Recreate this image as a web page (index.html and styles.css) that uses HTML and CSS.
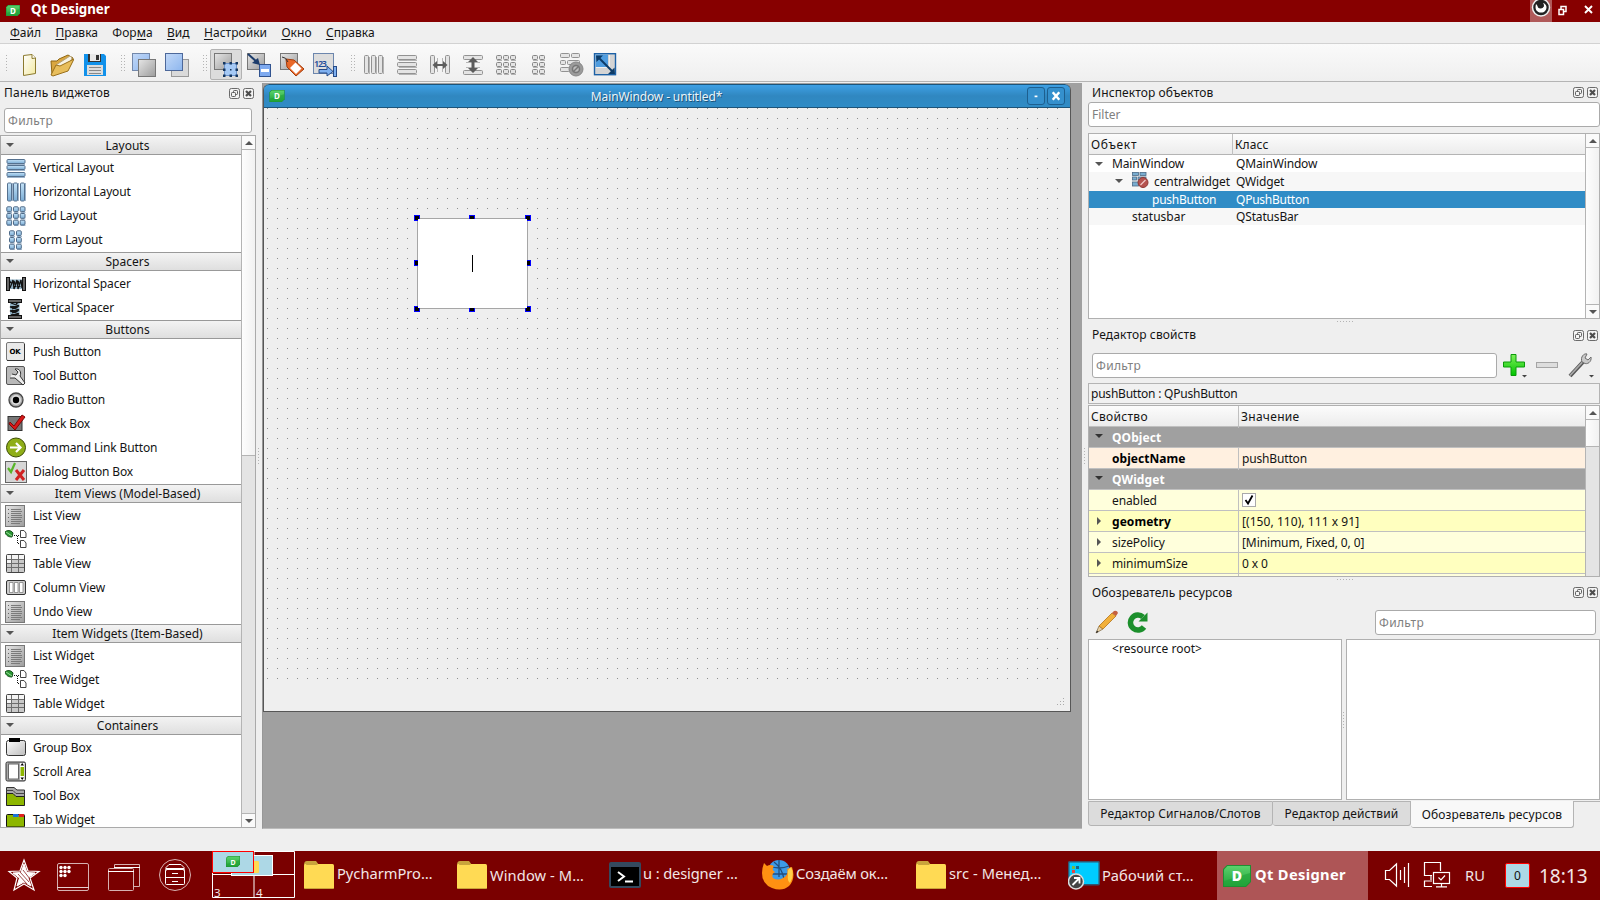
FILE: index.html
```html
<!DOCTYPE html>
<html lang="ru">
<head>
<meta charset="utf-8">
<title>Qt Designer</title>
<link rel="stylesheet" href="styles.css">
</head>
<body>
<svg class="defs" width="0" height="0" aria-hidden="true">
  <defs>
    <linearGradient id="gBlue" x1="0" y1="0" x2="0" y2="1"><stop offset="0" stop-color="#c4e2f7"/><stop offset="1" stop-color="#7badd6"/></linearGradient>
    <linearGradient id="gGray" x1="0" y1="0" x2="1" y2="1"><stop offset="0" stop-color="#e6e6e6"/><stop offset="1" stop-color="#9c9c9c"/></linearGradient>
    <linearGradient id="gLight" x1="0" y1="0" x2="1" y2="1"><stop offset="0" stop-color="#fdfdfd"/><stop offset="1" stop-color="#bdbdbd"/></linearGradient>
    <linearGradient id="gSky" x1="0" y1="0" x2="1" y2="1"><stop offset="0" stop-color="#c3d9f8"/><stop offset="1" stop-color="#8db6ee"/></linearGradient>
    <linearGradient id="gPaper" x1="0" y1="0" x2="1" y2="1"><stop offset="0" stop-color="#fff"/><stop offset="1" stop-color="#f3e9a0"/></linearGradient>
    <linearGradient id="gGreen" x1="0" y1="0" x2="0" y2="1"><stop offset="0" stop-color="#5bd16c"/><stop offset="1" stop-color="#22a63a"/></linearGradient>
    <linearGradient id="gPlus" x1="0" y1="0" x2="0" y2="1"><stop offset="0" stop-color="#7ff05a"/><stop offset="1" stop-color="#00c400"/></linearGradient>
  </defs>
  <symbol id="qt" viewBox="0 0 28 22"><path d="M4 0H28V17L23 22H0V4Z" fill="#1f8f33"/><path d="M4.500 1H27V16.500L22.500 21H1V4.500Z" fill="url(#gGreen)"/><path d="M1 16 27 8V16.500L22.500 21H1Z" fill="#1fa238" opacity=".6"/></symbol>
  <symbol id="float" viewBox="0 0 11 11"><rect x=".5" y=".5" width="10" height="10" rx="1.800" fill="#f4f4f4" stroke="#6a6a6a"/><rect x="4.500" y="2.500" width="4" height="4" rx=".8" fill="none" stroke="#5e5e5e"/><rect x="2.500" y="4.500" width="4" height="4" rx=".8" fill="#f4f4f4" stroke="#5e5e5e"/></symbol>
  <symbol id="close" viewBox="0 0 11 11"><rect x=".5" y=".5" width="10" height="10" rx="1.800" fill="#f4f4f4" stroke="#6a6a6a"/><path d="M3 3 8 8M8 3 3 8" stroke="#4e4e4e" stroke-width="2.200"/></symbol>
  <symbol id="vlay" viewBox="0 0 20 20"><g fill="url(#gBlue)" stroke="#55718f"><rect x="1" y="1.500" width="18" height="4" rx="1"/><rect x="1" y="7.500" width="18" height="4" rx="1"/><rect x="1" y="14.500" width="18" height="4" rx="1"/></g><path d="M1 6.500H19M1 12.500H19M1 19.500H19" stroke="#9db4cc"/></symbol>
  <symbol id="hlay" viewBox="0 0 20 20"><g fill="url(#gBlue)" stroke="#55718f"><rect x="1.500" y="1" width="4" height="18" rx="1"/><rect x="7.500" y="1" width="4" height="18" rx="1"/><rect x="14.500" y="1" width="4" height="18" rx="1"/></g><path d="M6.500 1V19M12.500 1V19M19.500 1V19" stroke="#9db4cc"/></symbol>
  <symbol id="grid" viewBox="0 0 20 20"><path d="M1 6.500H6M8 6.500H12.500M14.500 6.500H19.500M1 13H6M8 13H12.500M14.500 13H19.500M1 19.600H6M8 19.600H12.500M14.500 19.600H19.500" stroke="#9db4cc"/><g fill="url(#gBlue)" stroke="#4d6987"><rect x=".8" y=".8" width="4.800" height="4.800" rx="1"/><rect x="7.500" y=".8" width="4.800" height="4.800" rx="1"/><rect x="14.200" y=".8" width="4.800" height="4.800" rx="1"/><rect x=".8" y="7.500" width="4.800" height="4.800" rx="1"/><rect x="7.500" y="7.500" width="4.800" height="4.800" rx="1"/><rect x="14.200" y="7.500" width="4.800" height="4.800" rx="1"/><rect x=".8" y="14.200" width="4.800" height="4.800" rx="1"/><rect x="7.500" y="14.200" width="4.800" height="4.800" rx="1"/><rect x="14.200" y="14.200" width="4.800" height="4.800" rx="1"/></g></symbol>
  <symbol id="form" viewBox="0 0 20 20"><path d="M4 6.500H9M11 6.500H16M4 13H9M11 13H16M4 19.600H9M11 19.600H16" stroke="#9db4cc"/><g fill="url(#gBlue)" stroke="#4d6987"><rect x="3.500" y=".8" width="4.800" height="4.800" rx="1"/><rect x="10.500" y=".8" width="4.800" height="4.800" rx="1"/><rect x="3.500" y="7.500" width="4.800" height="4.800" rx="1"/><rect x="10.500" y="7.500" width="4.800" height="4.800" rx="1"/><rect x="3.500" y="14.200" width="4.800" height="4.800" rx="1"/><rect x="10.500" y="14.200" width="4.800" height="4.800" rx="1"/></g></symbol>
  <symbol id="spring" viewBox="0 0 22 22"><path d="M4 6.500H18V16H4Z" fill="#8fb0c4"/><path d="M5 15 8 7 9 16 12 7 13 16 16 7 17 15M4 7.500 6 10M9 8 11 14M13 8 15 14" fill="none" stroke="#111" stroke-width="1.300"/><rect x="1.500" y="4.500" width="3" height="13" fill="#666" stroke="#111"/><rect x="17.500" y="4.500" width="3" height="13" fill="#666" stroke="#111"/></symbol>
  <symbol id="list" viewBox="0 0 22 22"><rect x=".5" y=".5" width="19" height="21" fill="url(#gGray)" stroke="#777"/><path d="M6 4.500H16M6 6.500H17M6 8.500H16M6 10.500H17M6 12.500H17M6 14.500H16M6 16.500H17M6 18.500H15" stroke="#7b7b7b"/><path d="M3 4.500H4M3 8.500H4M3 12.500H4M3 16.500H4" stroke="#666"/></symbol>
  <symbol id="tree" viewBox="0 0 22 22"><path d="M0 3C2 1 6 1 8 4L7 8C4 8 1 7 0 3Z" fill="#2c9a35" stroke="#124d18"/><path d="M1 3 7 7" stroke="#b5e8b0" stroke-width=".8"/><path d="M9 6.500H15M12.500 7V15M13 14.500H16" stroke="#111" stroke-dasharray="1 1" fill="none"/><path d="M15.500 1.500H19L21 4V8.500H15.500ZM15.500 11.500H19L21 14V18.500H15.500Z" fill="#fff" stroke="#444"/></symbol>
  <symbol id="table" viewBox="0 0 22 22"><rect x="1.500" y="1.500" width="18" height="18" rx="1" fill="#c9c9c9" stroke="#444"/><path d="M2 2H19V6H2ZM2 7H6V10H2Z" fill="#f5f5f5"/><path d="M2 6.500H19M2 10.500H19M2 14.500H19M6.500 2V19M13.500 2V19" stroke="#6d6d6d"/></symbol>
  <symbol id="folder" viewBox="0 0 30 28"><path d="M0 4Q0 0 3 0H12L15 4V8H0Z" fill="#c9a43c"/><rect y="3" width="30" height="25" rx="1.500" fill="#ffda54"/><path d="M0 4H2L3 1H11L14 4" fill="#c9a43c"/><path d="M1 27.500H29" stroke="#caa53b"/></symbol>
  <symbol id="gv" viewBox="0 0 24 24"><g fill="#e4e4e4" stroke="#929292"><rect x="2.500" y="2.500" width="4" height="18" rx="1"/><rect x="9.500" y="2.500" width="4" height="18" rx="1"/><rect x="16.500" y="2.500" width="4" height="18" rx="1"/></g><path d="M7.500 4V21M14.500 4V21M21.500 4V21" stroke="#b4b4b4"/></symbol>
  <symbol id="gh" viewBox="0 0 24 24"><g fill="#e4e4e4" stroke="#929292"><rect x="2.500" y="2.500" width="19" height="4" rx="1"/><rect x="2.500" y="9.500" width="19" height="4" rx="1"/><rect x="2.500" y="16.500" width="19" height="4" rx="1"/></g><path d="M4 7.500H22M4 14.500H22M4 21.500H22" stroke="#b4b4b4"/></symbol>
</svg>

<header class="titlebar">
  <span class="qlogo"><svg width="14" height="11"><use href="#qt"/></svg><b>D</b></span>
  <span class="app-name">Qt Designer</span>
  <span class="win-ctl">
    <span class="eye"><svg width="22" height="22" viewBox="0 0 22 22"><circle cx="11" cy="7.500" r="8.500" fill="#222" stroke="#eee" stroke-width="1.500"/><path d="M6 4C4 11 9 14 14 12 18 9 17 4 13 3 16 8 11 10 6 4Z" fill="#fff"/><circle cx="10.500" cy="5.500" r="3" fill="#222"/></svg></span>
    <svg class="restore" width="9" height="11" viewBox="0 0 9 11"><path d="M3 4V1.500H8V6.500H6M1 4.500H5.500V9.500H1Z" fill="none" stroke="#fff" stroke-width="1.500"/></svg>
    <svg class="quit" width="9" height="9" viewBox="0 0 9 9"><path d="M1 1 8 8M8 1 1 8" stroke="#fff" stroke-width="1.900"/></svg>
  </span>
</header>

<nav class="menubar">
  <span><u>Ф</u>айл</span><span><u>П</u>равка</span><span>Фор<u>м</u>а</span><span><u>В</u>ид</span><span><u>Н</u>астройки</span><span><u>О</u>кно</span><span><u>С</u>правка</span>
</nav>

<div class="toolbar">
  <i class="grip first"></i>
  <span class="tool"><svg viewBox="0 0 24 24"><path d="M6.500 2.500 15 1.500 18.500 5V20.500L6.500 22.500Z" fill="url(#gPaper)" stroke="#8c7a2e"/><path d="M15 1.500V5.500L18.500 5" fill="#fff" stroke="#8c7a2e"/></svg></span>
  <span class="tool"><svg viewBox="0 0 24 24"><path d="M1 8H7L9 6 18 2 23 5 20 13 2 22Z" fill="#d9a640" stroke="#8f6714"/><path d="M6 12 20 3 22 5 19 12 5 20Z" fill="#f7f3e6" stroke="#b4a47c"/><path d="M1 22 6 12 10 13 24 6 18 18 3 23Z" fill="#e8be5c" stroke="#9a701b"/></svg></span>
  <span class="tool"><svg viewBox="0 0 24 24"><path d="M1 1H21L23 3V23H1Z" fill="#1191ea"/><path d="M5 1H18V9H5Z" fill="#333"/><path d="M7 1H17V8H7Z" fill="#e9e9e9"/><rect x="13" y="2" width="3" height="5" fill="#333"/><rect x="4" y="12" width="16" height="10" fill="#ddd"/><path d="M6 14.500H18M6 17.500H18M6 20.500H18" stroke="#888"/></svg></span>
  <i class="grip"></i>
  <span class="tool"><svg viewBox="0 0 24 24"><rect x=".5" y=".5" width="17" height="17" fill="url(#gSky)" stroke="#7388ab"/><rect x="6.500" y="6.500" width="17" height="17" fill="url(#gGray)" stroke="#777"/></svg></span>
  <span class="tool"><svg viewBox="0 0 24 24"><rect x="6.500" y="6.500" width="17" height="17" fill="#dadada" stroke="#999"/><rect x=".5" y=".5" width="17" height="17" fill="url(#gSky)" stroke="#4d689a"/></svg></span>
  <i class="grip"></i>
  <span class="tool on"><svg viewBox="0 0 24 24"><rect x=".5" y=".5" width="17" height="16" fill="url(#gGray)" stroke="#777"/><rect x="10.500" y="10.500" width="12" height="12" fill="#a5c9f5" stroke="#6c93cc"/><g fill="#14365f"><rect x="9" y="9" width="2.500" height="2.500"/><rect x="15.500" y="9" width="2.500" height="2.500"/><rect x="21.500" y="9" width="2.500" height="2.500"/><rect x="9" y="15.500" width="2.500" height="2.500"/><rect x="16" y="16" width="1.500" height="1.500"/><rect x="21.500" y="15.500" width="2.500" height="2.500"/><rect x="9" y="21.500" width="2.500" height="2.500"/><rect x="15.500" y="21.500" width="2.500" height="2.500"/><rect x="21.500" y="21.500" width="2.500" height="2.500"/></g></svg></span>
  <span class="tool"><svg viewBox="0 0 24 24"><rect x=".5" y=".5" width="17" height="16" fill="url(#gGray)" stroke="#777"/><rect x="12.500" y="11.500" width="11" height="12" fill="#7eaaf0" stroke="#31538f"/><path d="M14 17.500H22" stroke="#fff" stroke-width="3"/><path d="M1 1 11 10" stroke="#1d3c6b" stroke-width="2"/><path d="M13 12 5 10 11 5Z" fill="#1d3c6b"/></svg></span>
  <span class="tool"><svg viewBox="0 0 24 24"><rect x=".5" y=".5" width="17" height="16" fill="url(#gGray)" stroke="#777"/><path d="M6 6 14 7 24 16 16 23 7 14Z" fill="#e9692a" stroke="#a33c0c"/><path d="M15.500 9.500 21.500 15.500 16 21 10 15Z" fill="#fff"/><path d="M2 4Q6 4 8 9" stroke="#333" fill="none"/></svg></span>
  <span class="tool"><svg viewBox="0 0 24 24"><rect x=".5" y=".5" width="20" height="20" fill="#ddd" stroke="#6c86ad"/><text x="1" y="14" class="t123" textLength="13">123</text><path d="M6 16.500H14V13L20 18.500 14 23V20H6Z" fill="#7eb0f0" stroke="#264a86"/><rect x="20.500" y="13.500" width="3" height="10" fill="#7eb0f0" stroke="#264a86"/></svg></span>
  <i class="grip"></i>
  <span class="tool"><svg viewBox="0 0 24 24"><use href="#gv"/></svg></span>
  <span class="tool"><svg viewBox="0 0 24 24"><use href="#gh"/></svg></span>
  <span class="tool"><svg viewBox="0 0 24 24"><g fill="#e4e4e4" stroke="#929292"><rect x="2.500" y="2.500" width="4" height="18" rx="1"/><rect x="17.500" y="2.500" width="4" height="18" rx="1"/></g><path d="M9.500 5V19M14.500 5V19" stroke="#b5b5b5"/><path d="M4.500 12 9 8V11H15V8L19.500 12 15 16V13H9V16Z" fill="#5c5c5c"/></svg></span>
  <span class="tool"><svg viewBox="0 0 24 24"><g fill="#e4e4e4" stroke="#929292"><rect x="2.500" y="2.500" width="19" height="4" rx="1"/><rect x="2.500" y="17.500" width="19" height="4" rx="1"/></g><path d="M5 9.500H19M5 14.500H19" stroke="#b5b5b5"/><path d="M12 4 17 9H13.500V15H17L12 20 7 15H10.500V9H7Z" fill="#5c5c5c"/></svg></span>
  <span class="tool"><svg viewBox="0 0 24 24"><path d="M3 7.500H8M10 7.500H15M17 7.500H22M3 14.500H8M10 14.500H15M17 14.500H22M3 21.500H8M10 21.500H15M17 21.500H22" stroke="#b4b4b4"/><g fill="#e4e4e4" stroke="#868686"><rect x="2.500" y="2.500" width="5" height="4" rx="1"/><rect x="9.500" y="2.500" width="5" height="4" rx="1"/><rect x="16.500" y="2.500" width="5" height="4" rx="1"/><rect x="2.500" y="9.500" width="5" height="4" rx="1"/><rect x="9.500" y="9.500" width="5" height="4" rx="1"/><rect x="16.500" y="9.500" width="5" height="4" rx="1"/><rect x="2.500" y="16.500" width="5" height="4" rx="1"/><rect x="9.500" y="16.500" width="5" height="4" rx="1"/><rect x="16.500" y="16.500" width="5" height="4" rx="1"/></g></svg></span>
  <span class="tool"><svg viewBox="0 0 24 24"><path d="M6 7.500H11M13 7.500H18M6 14.500H11M13 14.500H18M6 21.500H11M13 21.500H18" stroke="#b4b4b4"/><g fill="#e4e4e4" stroke="#868686"><rect x="5.500" y="2.500" width="5" height="4" rx="1"/><rect x="12.500" y="2.500" width="5" height="4" rx="1"/><rect x="5.500" y="9.500" width="5" height="4" rx="1"/><rect x="12.500" y="9.500" width="5" height="4" rx="1"/><rect x="5.500" y="16.500" width="5" height="4" rx="1"/><rect x="12.500" y="16.500" width="5" height="4" rx="1"/></g></svg></span>
  <span class="tool"><svg viewBox="0 0 24 24"><g fill="#e4e4e4" stroke="#929292"><rect x=".5" y=".5" width="9" height="4" rx="1"/><rect x="11.500" y=".5" width="8" height="4" rx="1"/><rect x=".5" y="7.500" width="5" height="4" rx="1"/><rect x="7.500" y="7.500" width="12" height="4" rx="1"/><rect x=".5" y="14.500" width="9" height="4" rx="1"/></g><circle cx="16" cy="16" r="7" fill="#9b9b9b" stroke="#888"/><circle cx="16" cy="16" r="3.500" fill="#bdbdbd" stroke="#777" stroke-width="1.500"/><path d="M13 19 19 13" stroke="#777" stroke-width="1.500"/></svg></span>
  <span class="tool"><svg viewBox="0 0 24 24"><rect x="1.500" y=".7" width="21" height="21" fill="#d4d4d4" stroke="#1d61a6" stroke-width="1.400"/><path d="M2.500 1.500H15V14H2.500Z" fill="#4f9de0"/><path d="M16.500 2V14.500H3" fill="none" stroke="#eee"/><path d="M5 4 20 19" stroke="#0d3c68" stroke-width="2"/><path d="M3 2.500H10L3.500 9ZM22 21H15L21.500 14.500Z" fill="#0d3c68"/></svg></span>
</div>

<main class="work">
  <section class="left">
    <div class="dock-title"><span>Панель виджетов</span><svg width="11" height="11"><use href="#float"/></svg><svg width="11" height="11"><use href="#close"/></svg></div>
    <div class="field f-left">Фильтр</div>
    <div class="palette">
      <div class="items">
        <h4>Layouts</h4>
        <p><svg viewBox="0 0 20 20" class="s20"><use href="#vlay"/></svg>Vertical Layout</p>
        <p><svg viewBox="0 0 20 20" class="s20"><use href="#hlay"/></svg>Horizontal Layout</p>
        <p><svg viewBox="0 0 20 20" class="s20"><use href="#grid"/></svg>Grid Layout</p>
        <p><svg viewBox="0 0 20 20" class="s20"><use href="#form"/></svg>Form Layout</p>
        <h4>Spacers</h4>
        <p><svg viewBox="0 0 22 22"><use href="#spring"/></svg>Horizontal Spacer</p>
        <p><svg viewBox="0 0 22 22"><g transform="rotate(90 10 11)"><use href="#spring" width="22" height="22"/></g></svg>Vertical Spacer</p>
        <h4>Buttons</h4>
        <p><svg viewBox="0 0 22 22"><rect x="1.500" y="1.500" width="18" height="18" rx="1.500" fill="#e9e9e9" stroke="#777"/><path d="M2 19.500H19.500V3" fill="none" stroke="#333"/><text x="4.500" y="12.500" class="ok" textLength="11">OK</text></svg>Push Button</p>
        <p><svg viewBox="0 0 22 22"><rect x="1.500" y="1.500" width="18" height="18" rx="1.500" fill="#b9b9b9" stroke="#555"/><path d="M5 13H10L18 20 20 18 15 11C17 7 14 3 10 4L13 7 11 10 7 9" fill="#eee" stroke="#333"/></svg>Tool Button</p>
        <p><svg viewBox="0 0 22 22"><circle cx="11" cy="11" r="7" fill="#aaa" stroke="#444" stroke-width="1.300"/><circle cx="11" cy="11" r="5" fill="#dcdcdc"/><circle cx="11" cy="11" r="3.200" fill="#000"/></svg>Radio Button</p>
        <p><svg viewBox="0 0 22 22"><rect x="3" y="3.500" width="14" height="14" fill="#777" stroke="#333"/><path d="M5 9 9 13 17 2 20 4 10 17 4 11Z" fill="#d81818" stroke="#7d0a0a"/></svg>Check Box</p>
        <p><svg viewBox="0 0 22 22"><circle cx="11" cy="10.500" r="9.500" fill="#8fae18" stroke="#3c4c05"/><path d="M5 10.500H15M11 6 15.500 10.500 11 15" fill="none" stroke="#fff" stroke-width="2.200"/></svg>Command Link Button</p>
        <p><svg viewBox="0 0 22 22"><rect x=".5" y=".5" width="21" height="21" fill="#d6d6d6" stroke="#666"/><path d="M3 7 6 11 10 2" fill="none" stroke="#58b529" stroke-width="2.200"/><path d="M11 9 19 19M19 9 11 19" stroke="#d02222" stroke-width="3"/></svg>Dialog Button Box</p>
        <h4>Item Views (Model-Based)</h4>
        <p><svg viewBox="0 0 22 22"><use href="#list"/></svg>List View</p>
        <p><svg viewBox="0 0 22 22"><use href="#tree"/></svg>Tree View</p>
        <p><svg viewBox="0 0 22 22"><use href="#table"/></svg>Table View</p>
        <p><svg viewBox="0 0 22 22"><rect x="1.500" y="3.500" width="19" height="14" rx="1.500" fill="#ccc" stroke="#333"/><path d="M4.500 5.500H8V15.500H4.500ZM9.500 5.500H13V15.500H9.500ZM14.500 5.500H18V15.500H14.500Z" fill="#fff" stroke="#777" stroke-width=".7"/></svg>Column View</p>
        <p><svg viewBox="0 0 22 22"><use href="#list"/></svg>Undo View</p>
        <h4>Item Widgets (Item-Based)</h4>
        <p><svg viewBox="0 0 22 22"><use href="#list"/></svg>List Widget</p>
        <p><svg viewBox="0 0 22 22"><use href="#tree"/></svg>Tree Widget</p>
        <p><svg viewBox="0 0 22 22"><use href="#table"/></svg>Table Widget</p>
        <h4>Containers</h4>
        <p><svg viewBox="0 0 22 22"><rect x="1.500" y="3.500" width="19" height="15" rx="2" fill="url(#gLight)" stroke="#333"/><rect x="4" y="1" width="11" height="4" fill="#000"/></svg>Group Box</p>
        <p><svg viewBox="0 0 22 22"><rect x="1" y="1" width="19.500" height="19" rx="1.500" fill="#aaa" stroke="#333"/><rect x="3.500" y="3" width="10" height="15" fill="#fff" stroke="#666"/><rect x="15" y="2" width="4.500" height="17" fill="#fff"/><rect x="15.500" y="6" width="3.500" height="9" fill="#8db600"/><path d="M15.500 4.500H19L17.200 2ZM15.500 16.500H19L17.200 19Z"/></svg>Scroll Area</p>
        <p><svg viewBox="0 0 22 22"><path d="M1.500 2.500H9L12 5H19.500V20H1.500Z" fill="#aaa" stroke="#333"/><path d="M1.500 5.500H8L11 8.500H19.500" fill="none" stroke="#444"/><path d="M1.500 8.500H8L11 11.500H19.500V20.500H1.500Z" fill="#8db600" stroke="#222"/></svg>Tool Box</p>
        <p><svg viewBox="0 0 22 22"><rect x="1.500" y="5.500" width="18" height="12.500" rx="1" fill="#8db600" stroke="#111"/><rect x="8" y="5" width="5.500" height="3" fill="#1b72d8"/><rect x="14" y="5" width="5" height="3" fill="#e02020"/></svg>Tab Widget</p>
      </div>
      <div class="sbar s-left"><b class="up"></b><i class="thumb"></i><b class="down"></b></div>
    </div>
  </section>
  <div class="split"><i class="dots-v"></i></div>

  <section class="mdi">
    <div class="subwin">
      <div class="sub-title">
        <span class="qlogo q2"><svg width="16" height="12"><use href="#qt"/></svg><b>D</b></span>
        <span class="cap">MainWindow - untitled*</span>
        <span class="sbtn"><svg viewBox="0 0 17 17"><rect x="7" y="8" width="3" height="1.800" fill="#fff"/></svg></span>
        <span class="sbtn"><svg viewBox="0 0 17 17"><path d="M5 4.500 12 12.500M12 4.500 5 12.500" stroke="#fff" stroke-width="2.600"/></svg></span>
      </div>
      <div class="canvas">
        <svg width="808" height="603" viewBox="263 108 808 603">
          <defs><pattern id="pt" x="267" y="108" width="10" height="10" patternUnits="userSpaceOnUse"><rect width="1" height="1" fill="#8e8e8e"/></pattern></defs>
          <rect x="267" y="108" width="800" height="572" fill="url(#pt)"/>
          <rect x="417" y="218" width="111" height="91" fill="#a6a6a6"/>
          <g fill="#000" stroke="#00f">
            <rect x="414.500" y="215.500" width="5" height="5"/><rect x="469.500" y="215.500" width="5" height="5"/><rect x="525.500" y="215.500" width="5" height="5"/>
            <rect x="414.500" y="260.500" width="5" height="5"/><rect x="525.500" y="260.500" width="5" height="5"/>
            <rect x="414.500" y="306.500" width="5" height="5"/><rect x="469.500" y="306.500" width="5" height="5"/><rect x="525.500" y="306.500" width="5" height="5"/>
          </g>
          <rect x="418" y="219" width="109" height="89" fill="#fff"/>
          <rect x="472" y="255" width="1" height="17" fill="#000"/>
          <path d="M1063 698h1v1h-1zm0 3h1v1h-1zm-3 0h1v1h-1zm3 3h1v1h-1zm-3 0h1v1h-1zm-3 0h1v1h-1z" fill="#aaa"/>
        </svg>
      </div>
    </div>
  </section>
  <div class="split s2"><i class="dots-v"></i></div>

  <section class="right">
    <div class="dock-title dt1"><span>Инспектор объектов</span><svg width="11" height="11"><use href="#float"/></svg><svg width="11" height="11"><use href="#close"/></svg></div>
    <div class="field f-insp">Filter</div>
    <div class="box insp">
      <div class="cols">
        <div class="row head"><span class="wide">Объект</span><span>Класс</span></div>
        <div class="row r1"><span class="d1">MainWindow</span><span>QMainWindow</span></div>
        <div class="row r2 alt"><span class="d2"><svg width="17" height="16" viewBox="0 0 17 16"><g fill="#79add0" stroke="#4b6a86" stroke-width=".8"><rect x=".5" y=".5" width="6" height="3"/><rect x="8" y=".5" width="6" height="3"/><rect x=".5" y="5" width="4" height="3"/><rect x="6" y="5" width="8" height="3"/><rect x=".5" y="10" width="6" height="4"/></g><circle cx="11" cy="10.500" r="5" fill="#b5534f" stroke="#8f3734"/><path d="M8.500 13 13.500 8" stroke="#f0c8c8" stroke-width="1.300"/></svg>centralwidget</span><span>QWidget</span></div>
        <div class="row sel"><span class="d3">pushButton</span><span>QPushButton</span></div>
        <div class="row alt"><span class="d4">statusbar</span><span>QStatusBar</span></div>
      </div>
      <div class="sbar"><b class="up"></b><i class="thumb full"></i><b class="down"></b></div>
    </div>
    <div class="hs"><i class="dots-h"></i></div>

    <div class="dock-title dt2"><span>Редактор свойств</span><svg width="11" height="11"><use href="#float"/></svg><svg width="11" height="11"><use href="#close"/></svg></div>
    <div class="prop-tools">
      <div class="field">Фильтр</div>
      <svg width="26" height="26" viewBox="0 0 26 26"><path d="M9 1.500H14V9H22.500V14H14V22.500H9V14H1.500V9H9Z" fill="url(#gPlus)" stroke="#0a9a0a"/><path d="M20 22H25L22.500 24.500Z" fill="#444"/></svg>
      <svg width="26" height="26" viewBox="0 0 26 26"><rect x="1.500" y="9.500" width="21" height="5" fill="#ddd" stroke="#a5a5a5"/></svg>
      <svg width="27" height="26" viewBox="0 0 27 26"><path d="M2 23 15 9" stroke="#555" stroke-width="4"/><path d="M2 22.500 15 8.500" stroke="#aaa" stroke-width="1.800"/><path d="M14 9C12 4 16 0 19 1L17 5 20 7 23 4C24 9 19 12 16 10Z" fill="#c9c9c9" stroke="#6c6c6c"/><path d="M21 22H26L23.500 24.500Z" fill="#444"/></svg>
    </div>
    <div class="obj-label">pushButton : QPushButton</div>
    <div class="box props">
      <div class="cols">
        <div class="row head"><span>Свойство</span><span>Значение</span></div>
        <div class="row cat"><span class="open">QObject</span></div>
        <div class="row peach"><span><b>objectName</b></span><span>pushButton</span></div>
        <div class="row cat"><span class="open">QWidget</span></div>
        <div class="row y1"><span>enabled</span><span><i class="chk"><svg width="14" height="14" viewBox="0 0 14 14"><path d="M3.500 7 6 10.500 10.500 2.500" fill="none" stroke="#000" stroke-width="1.800"/></svg></i></span></div>
        <div class="row y2"><span class="shut"><b>geometry</b></span><span class="geo">[(150, 110), 111 x 91]</span></div>
        <div class="row y1"><span class="shut">sizePolicy</span><span>[Minimum, Fixed, 0, 0]</span></div>
        <div class="row y2"><span class="shut">minimumSize</span><span>0 x 0</span></div>
        <div class="row y1 tail"><span></span><span></span></div>
      </div>
      <div class="sbar"><b class="up"></b><i class="thumb short"></i><b class="down"></b></div>
    </div>
    <div class="hs"><i class="dots-h"></i></div>

    <div class="dock-title dt3"><span>Обозреватель ресурсов</span><svg width="11" height="11"><use href="#float"/></svg><svg width="11" height="11"><use href="#close"/></svg></div>
    <div class="res-tools">
      <svg width="24" height="24" viewBox="0 0 24 24"><path d="M1 23 4 16 8 19Z" fill="#e6cfa3" stroke="#7b6541" stroke-width=".7"/><path d="M4 16 17 3 21 6 8 19Z" fill="#f2b03a" stroke="#b3741a" stroke-width=".8"/><path d="M17 3 19 1Q22 0 23 3L21 6Z" fill="#c5603f"/><path d="M1 23 2 20.500 3.500 22Z" fill="#222"/></svg>
      <svg width="22" height="22" viewBox="0 0 22 22"><path d="M17 16A7.500 7.500 0 1 1 16 6" fill="none" stroke="#1c8f2c" stroke-width="5.500"/><path d="M20.500 1.500V10.500H11.500L14 8 16 6Z" fill="#1c8f2c"/></svg>
      <div class="field">Фильтр</div>
    </div>
    <div class="res-panes">
      <div class="pane">&lt;resource root&gt;</div>
      <div class="pane-split"><i class="dots-v"></i></div>
      <div class="pane"></div>
    </div>
    <div class="tabs"><span class="tab t1">Редактор Сигналов/Слотов</span><span class="tab t2">Редактор действий</span><span class="tab t3">Обозреватель ресурсов</span><span class="fill"></span></div>
  </section>
</main>

<footer class="taskbar">
  <svg class="launch" width="208" height="49" viewBox="0 851 208 49" fill="none" stroke="#fff">
    <path d="M24 860 28 871 39 871.500 30 878 34 890 24 884 14 890 17 878 9 871.500 20 871Z" stroke-width="1.200"/><path d="M24 864 27 872.500 35 873 28 878 31 886 24 882 17 886 19.500 878 13 873 21 872.500Z" fill="#fff"/><path d="M18 874 27 884M20 872 29 882M23 870 30 879" stroke="#7a0000" stroke-width=".7"/>
    <rect x="57.500" y="863.500" width="31" height="27" rx="1.500" stroke="#d6b1b1"/><path d="M57 887.500H89" stroke="#e8d0d0"/><g fill="#fff" stroke="none"><circle cx="61" cy="867.500" r="1.700"/><circle cx="65" cy="867.500" r="1.700"/><circle cx="69" cy="867.500" r="1.700"/><circle cx="61" cy="871.500" r="1.700"/><circle cx="65" cy="871.500" r="1.700"/><circle cx="69" cy="871.500" r="1.700"/><circle cx="61" cy="875.500" r="1.700"/><circle cx="65" cy="875.500" r="1.700"/></g>
    <g stroke="#d6b1b1"><path d="M114.500 869V864.500H139.500V886.500H134"/><path d="M114 867.500H140" stroke="#fff"/><rect x="108.500" y="868.500" width="25" height="22" rx="1"/><path d="M108 871.500H134" stroke="#fff"/></g>
    <circle cx="175" cy="875" r="15.500" stroke="#d6b1b1"/><path d="M166 871V867.500L169 864.500H181L184 867.500V871M166 868.500H184" /><rect x="165.500" y="869.500" width="19" height="15" rx="1"/><path d="M165 877.500H185M172 873.500H178M172 881.500H178"/>
  </svg>
  <div class="pager">
    <svg width="84" height="49" viewBox="212 851 84 49">
      <path d="M212.500 851.500H294.500V897.500H212.500ZM254 851V898M212 874.500H295" fill="none" stroke="#fff"/>
      <rect x="231.500" y="855.500" width="41" height="20" fill="#add8e6" stroke="#fff"/><rect x="250" y="861" width="9" height="12" rx="1" fill="#ffda54"/>
      <rect x="212.500" y="851.500" width="41" height="21" fill="#add8e6" stroke="#f00"/>
      <use href="#qt" x="226" y="856" width="14" height="11"/>
      <text x="230.500" y="865" class="pq">D</text>
      <text x="214" y="896.500" class="pn">3</text><text x="256" y="896.500" class="pn">4</text>
    </svg>
  </div>
  <div class="task k1"><svg width="30" height="28"><use href="#folder"/></svg><span>PycharmPro…</span></div>
  <div class="task k2 low"><svg width="30" height="28"><use href="#folder"/></svg><span>Window - M…</span></div>
  <div class="task k3"><svg width="32" height="26" viewBox="0 0 32 26"><rect width="32" height="26" rx="2" fill="#34495e"/><rect x="2" y="5" width="28" height="19" fill="#000"/><path d="M9 10 15 14.500 9 19M16 19.500H24" fill="none" stroke="#fff" stroke-width="2"/></svg><span>u : designer …</span></div>
  <div class="task k4"><svg width="32" height="32" viewBox="0 0 32 32"><circle cx="17" cy="12" r="11" fill="#3d9be9"/><path d="M17 1V18M8 7Q17 11 27 7M7 15H27M12 3Q20 9 22 20" stroke="#234e7d" fill="none" stroke-width="1.300"/><path d="M30 8Q34 20 27 27 20 33 10 29 0 25 0 14 0 9 2 4L5 7Q8 5 12 7 9 11 13 13 9 15 11 19 16 22 21 19 27 16 25 10Z" fill="#ff9112"/><path d="M29 8Q33 16 28 24 25 22 26 16Q25 12 27 10Z" fill="#ffcf4a"/></svg><span>Создаём ок…</span></div>
  <div class="task k5"><svg width="30" height="28"><use href="#folder"/></svg><span>src - Менед…</span></div>
  <div class="task k6 low"><svg width="32" height="29" viewBox="0 0 32 29"><rect x=".7" y=".7" width="30.500" height="23" rx="1" fill="#0cf" stroke="#34556e" stroke-width="1.500"/><path d="M4 5H7V8H4Z" fill="#7ab648"/><path d="M8 5H11V8H8Z" fill="#17678a"/><path d="M4 9H7V12H4Z" fill="#e04848"/><circle cx="8" cy="20.500" r="7.500" fill="#444" stroke="#ddd" stroke-width="1.500"/><path d="M4.500 24 11 17.500M6 17H11.500V22.500" fill="none" stroke="#fff" stroke-width="1.800"/></svg><span>Рабочий ст…</span></div>
  <div class="task k7 active"><span class="qlogo q3"><svg width="28" height="22"><use href="#qt"/></svg><b>D</b></span><span>Qt Designer</span></div>
  <svg class="tray" width="70" height="49" viewBox="1384 851 70 49" fill="none" stroke="#fff" stroke-width="1.200">
    <path d="M1385.500 870.500H1389.500L1396.500 864V886L1389.500 879.500H1385.500ZM1400.500 870V880M1404.500 867V883M1408.500 863V887"/>
    <path d="M1432 875.500H1424.500V862.500H1440.500V871M1431 876V880M1432 881H1424.500V886.500H1432" /><rect x="1433.500" y="872.500" width="16" height="11"/><path d="M1441.500 884V886.500M1436 886.800H1447M1438.500 877.500 1441 880 1445 875.500"/>
  </svg>
  <span class="lang">RU</span><span class="count">0</span><span class="clock">18:13</span>
</footer>
</body>
</html>
```
FILE: styles.css
```css
* { box-sizing: border-box; }
body {
  margin: 0; width: 1600px; height: 900px; overflow: hidden;
  display: flex; flex-direction: column;
  background: #efefef; color: #141414;
  font-family: "Noto Sans", sans-serif; font-size: 12px; line-height: 18px; letter-spacing: .1px;
}
p, h4 { margin: 0; font-weight: 400; }
svg { display: block; flex: none; }
.defs { position: absolute; }

/* window title */
.titlebar { height: 22px; background: #870000; color: #fff; display: flex; align-items: flex-start; padding-left: 6px; flex: none; }
.qlogo { display: grid; margin-top: 5px; height: max-content; letter-spacing: 0; }
.qlogo > * { grid-area: 1 / 1; place-self: center; }
.qlogo b { color: #fff; font-size: 8px; line-height: 8px; }
.app-name { font-size: 13.33px; letter-spacing: -.05px; font-weight: 700; margin-left: 11px; line-height: 19px; }
.win-ctl { margin-left: auto; display: flex; align-items: center; height: 22px; padding-right: 7px; }
.eye { background: #b05a5a; margin-right: 6px; }
.restore { margin: -2px 17px 0 0; }
.quit { margin-top: -3px; }

.menubar { height: 22px; flex: none; display: flex; gap: 14.300px; padding: 1px 0 0 10px; border-bottom: 1px solid #d2d2d2; line-height: 19px; letter-spacing: .04px; }
.menubar u { text-underline-offset: 2px; text-decoration-thickness: 1px; }

/* toolbar */
.toolbar { height: 38px; flex: none; display: flex; align-items: flex-start; padding-top: 5px; background: linear-gradient(#fafafa, #efefef); border-bottom: 1px solid #b4b4b4; }
.grip { width: 16px; height: 18px; margin-top: 5px; background: radial-gradient(circle, #b4b4b4 .6px, transparent .8px) 0 0 / 3px 3px content-box; padding: 0 3px 0 8px; background-clip: content-box; }
.grip.first { width: 13px; padding: 0 4px 0 5px; }
.tool { width: 33px; height: 31px; padding: 4px 0 0 4px; }
.tool svg { width: 24px; height: 24px; }
.tool.on { background: #dcdcdc; border: 1px solid #b2b2b2; border-radius: 2px; width: 32px; margin-right: 1px; padding: 3px; }
.t123 { font: 600 9px "Noto Sans", sans-serif; fill: #1d4c9a; }
.ok { font: 700 7px "DejaVu Sans", sans-serif; }

.work { flex: none; height: 769px; display: grid; grid-template-columns: 256px 6px 820px 6px 512px; }
.dock-title { display: flex; align-items: center; height: 20px; padding: 0 2px 0 4px; gap: 3px; }
.dock-title span { margin-right: auto; }
.field { height: 25px; background: #fff; border: 1px solid #aaa; border-radius: 3px; padding-left: 3px; line-height: 23px; color: #808080; letter-spacing: .35px; }
.left { padding-top: 1px; }
.left .dock-title { letter-spacing: .25px; }
.f-left { margin: 5px 4px 2px; }
.palette { height: 693px; border: 1px solid #aaa; background: #fff; display: grid; grid-template-columns: 1fr 14px; overflow: hidden; letter-spacing: -.13px; }
.items { overflow: hidden; }
.items h4 { height: 19px; margin-bottom: 1px; border-top: 1px solid #999; border-bottom: 1px solid #999; background: linear-gradient(#f3f3f3, #dfdfdf); text-align: center; line-height: 18px; padding-left: 13px; position: relative; letter-spacing: 0; }
.items h4:first-child { border-top-color: #f8f8f8; }
.items h4::before { content: ""; position: absolute; left: 5px; top: 6px; border: 4px solid transparent; border-top-color: #555; border-bottom: 0; }
.items p { height: 24px; display: flex; align-items: center; line-height: 24px; padding: 0 0 1px 4px; }
.items p svg { width: 22px; height: 22px; margin-right: 6px; }
.items p svg.s20 { width: 20px; height: 20px; margin: 0 7px 0 1px; }

.sbar { background: #e4e4e4; border-left: 1px solid #b4b4b4; display: flex; flex-direction: column; }
.sbar b { height: 14px; background: #fafafa; display: grid; place-items: center; flex: none; }
.sbar b::after { content: ""; border: 4px solid transparent; }
.sbar .up { border-bottom: 1px solid #b4b4b4; }
.sbar .up::after { border-bottom-color: #555; border-top: 0; }
.sbar .down { margin-top: auto; border-top: 1px solid #b4b4b4; }
.sbar .down::after { border-top-color: #555; border-bottom: 0; }
.thumb { display: block; background: linear-gradient(90deg, #fdfdfd, #f1f1f1); border-bottom: 1px solid #b4b4b4; height: 306px; }
.thumb.full { height: auto; flex: 1; border: 0; }
.thumb.short { height: 27px; }

.split { display: flex; align-items: center; justify-content: center; padding-bottom: 21px; }
.dots-v { width: 4px; height: 18px; background: radial-gradient(circle, #b4b4b4 .6px, transparent .8px) 0 0 / 3px 3px; }
.dots-h { display: block; width: 18px; height: 3px; background: radial-gradient(circle, #b4b4b4 .6px, transparent .8px) 0 0 / 3px 3px; }

/* form editor */
.mdi { margin-top: 1px; height: 746px; background: #a0a0a0; border-left: 1px solid #979797; border-bottom: 1px solid #bbb; padding-top: 1px; }
.subwin { width: 808px; height: 628px; border: 1px solid #565656; border-top: 0; border-radius: 6px 6px 0 0; overflow: hidden; background: #efefef; }
.sub-title { height: 24px; margin: 0 -1px; border: 1px solid #1d5479; border-radius: 6px 6px 0 0; background: linear-gradient(#3ea0e4, #3087c0 50%, #308cc6); display: flex; align-items: center; padding: 0 5px; color: #eaf4fb; }
.q2 { margin-top: 0; }
.cap { flex: 1; text-align: center; text-shadow: 1px 1px 0 #1d5479; padding-left: 3px; letter-spacing: -.13px; line-height: 20px; padding-top: 1px; }
.sbtn { width: 18px; height: 18px; border: 1px solid #1d5f8f; border-radius: 3px; margin-left: 2px; background: #3590cd; }
.sbtn svg { width: 16px; height: 16px; }
.canvas svg { margin-left: -1px; }

/* right docks */
.f-insp { margin-bottom: 6px; letter-spacing: 0; }
.dt1 { padding-top: 1px; }
.box { border: 1px solid #b0b0b0; background: #fff; display: grid; grid-template-columns: 1fr 14px; overflow: hidden; letter-spacing: -.16px; }
.insp { height: 186px; }
.row { display: grid; grid-template-columns: 143px 1fr; height: 17px; line-height: 17px; white-space: nowrap; }
.row.head { height: 21px; line-height: 21px; background: linear-gradient(#fcfcfc, #ececec); border-bottom: 1px solid #b4b4b4; letter-spacing: .3px; }
.row.head .wide { letter-spacing: .65px; }
.head span { padding-left: 2px; }
.head span + span { border-left: 1px solid #c0c0c0; }
.insp .row span + span { padding-left: 4px; }
.insp .row.head span + span { padding-left: 2px; letter-spacing: .1px; }
.insp .r1 { height: 17px; line-height: 17px; }
.insp .r2 { height: 19px; line-height: 19px; }
.alt { background: #f7f7f7; }
.row.sel { background: #308cc6; color: #fff; letter-spacing: -.24px; }
.d1, .d2, .open, .shut { position: relative; }
.d1 { padding-left: 23px; }
.d2 { display: flex; padding-left: 43px; gap: 5px; letter-spacing: -.1px; }
.d3 { padding-left: 63px; }
.d4 { padding-left: 43px; letter-spacing: 0; }
.d1::before, .d2::before, .open::before { content: ""; position: absolute; left: 6px; top: 7px; border: 4px solid transparent; border-top: 4px solid #555; border-bottom: 0; }
.d2::before { left: 26px; }
.hs { height: 5px; display: flex; justify-content: center; align-items: center; padding-left: 2px; }
.dt2 { height: 22px; }
.prop-tools { display: flex; height: 37px; padding: 7px 5px 0 4px; }
.prop-tools .field { width: 405px; flex: none; }
.prop-tools svg { margin-left: 5px; }
.prop-tools svg + svg { margin-left: 7px; }
.obj-label { height: 21px; border: 1px solid #b4b4b4; background: #f1f1f1; line-height: 20px; padding-left: 2px; margin-bottom: 1px; letter-spacing: -.22px; }
.props { height: 172px; }
.props .row { grid-template-columns: 149px 1fr; height: 21px; border-bottom: 1px solid #c0c0c0; line-height: 22px; }
.props .row.head { line-height: 22px; }
.props .row:not(.head) span { padding-left: 23px; }
.props .row:not(.head) span + span { border-left: 1px solid #c0c0c0; padding-left: 3px; }
.props .geo { letter-spacing: .06px; }
.props .y1, .props .y2 { letter-spacing: -.1px; }
.props .row.cat { background: #a0a0a0; color: #fff; font-weight: 700; grid-template-columns: 1fr; letter-spacing: .1px; }
.open::before { border-top-color: #333; }
.peach { background: #fff0e0; }
.y1 { background: #ffffdc; }
.y2 { background: #ffffbf; }
.props b { color: #000; letter-spacing: .05px; }
.shut::before { content: ""; position: absolute; left: 8px; top: 6px; border: 4px solid transparent; border-left-color: #555; border-right: 0; }
.chk { display: block; width: 14px; height: 14px; margin-top: 3px; border: 1px solid #aaa; background: #fff; }
.chk svg { margin: -1px; }
.dt3 { height: 21px; }
.res-tools { display: flex; height: 36px; padding: 7px 4px 0 7px; }
.res-tools svg + svg { margin: 1px 0 0 8px; }
.res-tools .field { width: 221px; margin-left: auto; }
.res-panes { display: grid; grid-template-columns: 254px 4px 254px; height: 161px; }
.pane { background: #fff; border: 1px solid #b0b0b0; padding-left: 23px; line-height: 18px; letter-spacing: .03px; }
.pane-split { display: flex; align-items: center; }
.tabs { display: flex; margin-top: 1px; align-items: flex-start; }
.tab { height: 25px; line-height: 24px; text-align: center; background: #dcdcdc; border: 1px solid #b4b4b4; border-radius: 0 0 3px 3px; }
.t1 { width: 185px; } .t2 { width: 138px; border-left: 0; letter-spacing: .14px; }
.t3 { width: 163px; height: 27px; line-height: 28px; background: #f8f8f8; border-top: 0; border-left: 0; }
.fill { flex: 1; border-top: 1px solid #b4b4b4; }

/* taskbar */
.taskbar { height: 49px; background: #7a0000; color: #f3e6e6; display: flex; flex: none; font-size: 14.67px; }
.pager { margin-left: 4px; }
.pn { font: 11.500px "Noto Sans", sans-serif; fill: #f3e6e6; }
.pq { font: 700 7px "Noto Sans", sans-serif; fill: #fff; }
.task { display: flex; align-items: center; gap: 3px; padding: 0 0 1px 8px; width: 153px; white-space: nowrap; }
.task span { margin-top: -5px; }
.task.low span { margin-top: 0; }
.k1 { letter-spacing: 0; }
.k3, .k4, .k6 { gap: 2px; padding-left: 7px; }
.k3 { letter-spacing: -.12px; }
.k4 { letter-spacing: -.15px; }
.k6 { letter-spacing: .2px; }
.active { width: 151px; background: #ae5556; color: #fff; font-weight: 700; padding-left: 6px; gap: 4px; margin-left: 3px; letter-spacing: .35px; }
.active span { margin-top: -3px; }
.active .q3 { margin-top: 2px; }
.q3 b { font-size: 14px; line-height: 14px; }
.tray { margin-left: 16px; }
.lang { line-height: 48px; width: 51px; padding-left: 11px; }
.count { width: 25px; height: 25px; margin: 12px 0 0; border: 1px solid #f00; border-radius: 2px; background: #add8e6; color: #111; text-align: center; font-size: 12px; line-height: 23px; }
.clock { font-size: 19px; line-height: 50px; margin-left: 9px; letter-spacing: 0; }
```
